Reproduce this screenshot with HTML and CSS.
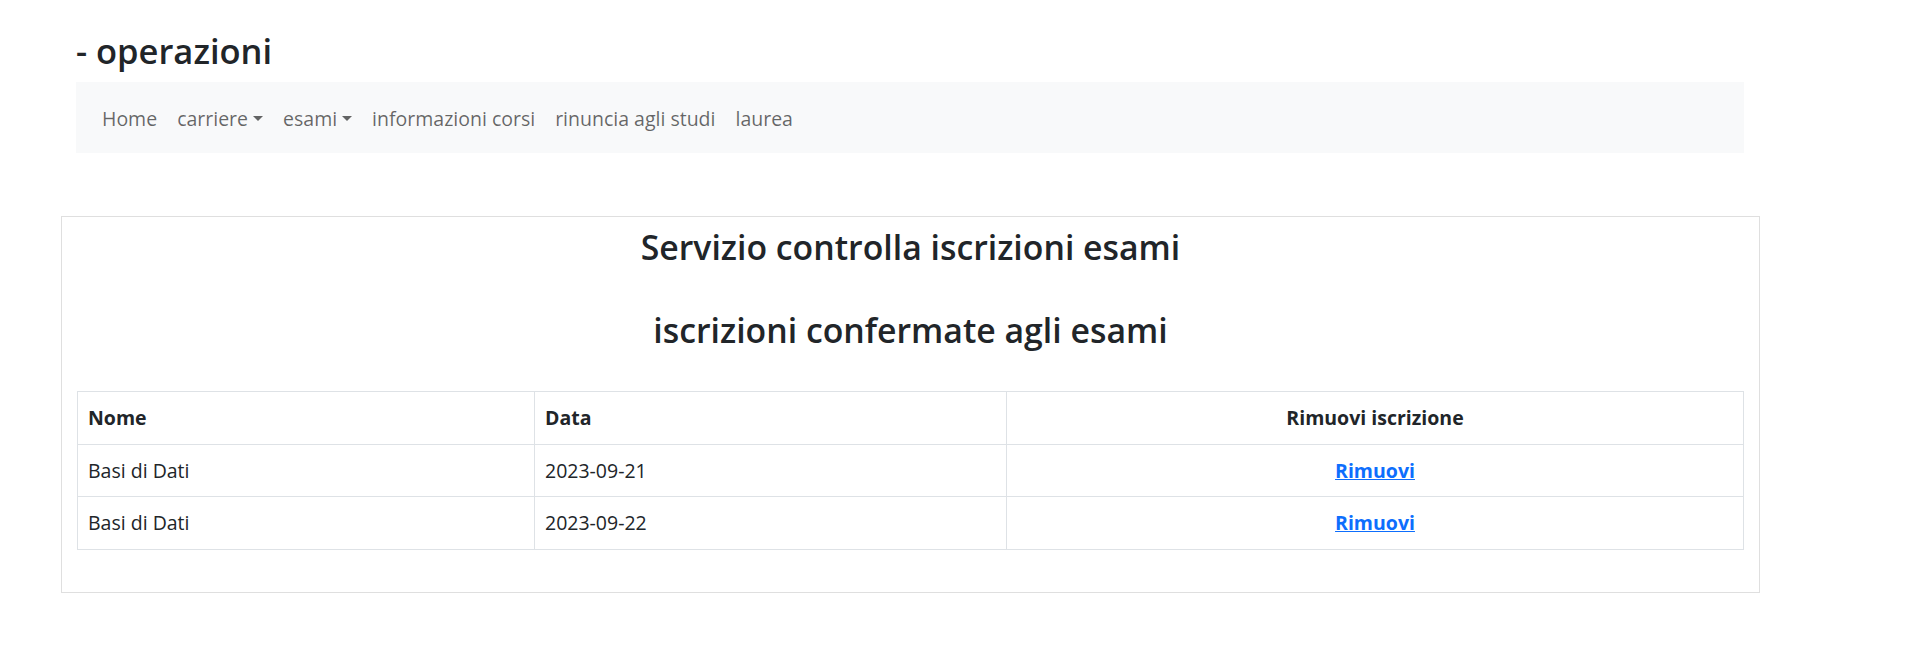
FILE: index.html
```html
<!DOCTYPE html>
<html lang="it">
<head>
<meta charset="utf-8">
<title>operazioni</title>
<link rel="stylesheet" href="styles.css">
</head>
<body>
<h2 class="page-title">- operazioni</h2>
<nav class="navbar">
  <ul class="nav-list">
    <li><a class="nav-link" href="#">Home</a></li>
    <li><a class="nav-link dropdown-toggle" href="#">carriere</a></li>
    <li><a class="nav-link dropdown-toggle" href="#">esami</a></li>
    <li><a class="nav-link" href="#">informazioni corsi</a></li>
    <li><a class="nav-link" href="#">rinuncia agli studi</a></li>
    <li><a class="nav-link" href="#">laurea</a></li>
  </ul>
</nav>
<div class="card">
  <h2 class="card-heading first">Servizio controlla iscrizioni esami</h2>
  <h2 class="card-heading second">iscrizioni confermate agli esami</h2>
  <table class="exams">
    <colgroup>
      <col class="col-name">
      <col class="col-date">
      <col class="col-action">
    </colgroup>
    <thead>
      <tr>
        <th>Nome</th>
        <th>Data</th>
        <th class="center">Rimuovi iscrizione</th>
      </tr>
    </thead>
    <tbody>
      <tr>
        <td>Basi di Dati</td>
        <td>2023-09-21</td>
        <td class="center"><a class="remove-link" href="#">Rimuovi</a></td>
      </tr>
      <tr>
        <td>Basi di Dati</td>
        <td>2023-09-22</td>
        <td class="center"><a class="remove-link" href="#">Rimuovi</a></td>
      </tr>
    </tbody>
  </table>
</div>
</body>
</html>
```
FILE: styles.css
```css
* {
  box-sizing: border-box;
}

body {
  margin: 0;
  background: #fff;
  color: #212529;
  font-family: "Open Sans", "Liberation Sans", sans-serif;
  font-size: 19.5px;
  line-height: 30px;
}

.page-title {
  margin: 27px 0 7px 76px;
  font-size: 34.5px;
  line-height: 48px;
  font-weight: 600;
  color: #212529;
}

.navbar {
  margin-left: 76px;
  width: 1668px;
  height: 71px;
  background: #f8f9fa;
  display: flex;
  align-items: center;
  padding: 2px 0 0 16px;
}

.nav-list {
  list-style: none;
  margin: 0;
  padding: 0;
  display: flex;
  align-items: center;
}

.nav-link {
  display: block;
  padding: 0 10px;
  color: rgba(0, 0, 0, 0.6);
  text-decoration: none;
  font-size: 19.5px;
  line-height: 30px;
}

.dropdown-toggle::after {
  content: "";
  display: inline-block;
  margin-left: 5px;
  vertical-align: 5px;
  border-top: 5.5px solid;
  border-left: 5.5px solid transparent;
  border-right: 5.5px solid transparent;
  border-bottom: 0;
}

.card {
  margin: 63px 0 0 61px;
  width: 1699px;
  border: 1px solid rgba(0, 0, 0, 0.125);
  padding: 6px 15px 42px;
}

.card-heading {
  margin: 0;
  text-align: center;
  font-size: 33.8px;
  line-height: 48px;
  font-weight: 600;
  color: #212529;
}

.card-heading.first {
  margin-bottom: 35px;
}

.card-heading.second {
  margin-bottom: 37px;
}

.exams {
  width: 1667px;
  border-collapse: collapse;
  table-layout: fixed;
}

.col-name {
  width: 457px;
}

.col-date {
  width: 472px;
}

.exams th,
.exams td {
  border: 1px solid #dee2e6;
  padding: 11px 10px 10.6px;
  text-align: left;
  vertical-align: top;
  font-size: 19.5px;
  line-height: 30px;
}

.exams th {
  font-weight: 700;
}

.exams td {
  font-weight: 400;
}

.exams .center {
  text-align: center;
}

.remove-link {
  color: #0d6efd;
  font-weight: 700;
  text-decoration: underline;
}
```
